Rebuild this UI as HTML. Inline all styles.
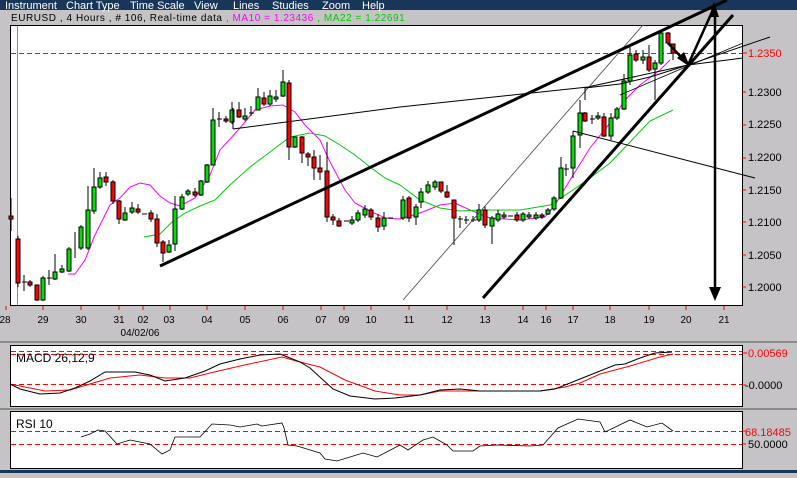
<!DOCTYPE html>
<html><head><meta charset="utf-8"><style>
body{margin:0;width:797px;height:473px;overflow:hidden;background:#c6c3c6;font-family:"Liberation Sans",sans-serif}
</style></head><body>
<svg width="797" height="473" xmlns="http://www.w3.org/2000/svg" font-family="Liberation Sans, sans-serif">
<rect width="797" height="473" fill="#c6c3c6"/>
<rect width="797" height="10" fill="#183659"/>
<g fill="#fff" font-size="11">
<text x="5" y="9">Instrument</text><text x="66" y="9">Chart Type</text><text x="130" y="9">Time Scale</text><text x="194" y="9">View</text><text x="233" y="9">Lines</text><text x="272" y="9">Studies</text><text x="322" y="9">Zoom</text><text x="362" y="9">Help</text>
</g>
<text x="11" y="21" font-size="10" fill="#000" letter-spacing="0.55">EURUSD , 4 Hours , # 106, Real-time data <tspan fill="#f0f">, MA10 = 1.23436</tspan><tspan fill="#0c0"> , MA22 = 1.22691</tspan></text>
<rect x="10.5" y="25.5" width="732" height="280" fill="#fff" stroke="#000"/>
<line x1="17.5" y1="26" x2="17.5" y2="305" stroke="#888"/>
<line x1="11" y1="53.5" x2="742" y2="53.5" stroke="#f00" stroke-dasharray="5,3"/>
<g font-size="11" fill="#000">
<text x="748" y="57" fill="#f00">1.2350</text><text x="748" y="96">1.2300</text><text x="748" y="128">1.2250</text><text x="748" y="161">1.2200</text><text x="748" y="194">1.2150</text><text x="748" y="226">1.2100</text><text x="748" y="259">1.2050</text><text x="748" y="291">1.2000</text>
</g>
<g stroke="#f00"><line x1="742" y1="53" x2="747" y2="53"/><line x1="742" y1="92" x2="746" y2="92"/><line x1="742" y1="125" x2="746" y2="125"/><line x1="742" y1="158" x2="746" y2="158"/><line x1="742" y1="190" x2="746" y2="190"/><line x1="742" y1="222" x2="746" y2="222"/><line x1="742" y1="255" x2="746" y2="255"/><line x1="742" y1="287" x2="746" y2="287"/></g>
<g stroke="#f00"><line x1="6" y1="306" x2="6" y2="310"/><line x1="43" y1="306" x2="43" y2="310"/><line x1="81" y1="306" x2="81" y2="310"/><line x1="119" y1="306" x2="119" y2="310"/><line x1="143" y1="306" x2="143" y2="310"/><line x1="170" y1="306" x2="170" y2="310"/><line x1="207" y1="306" x2="207" y2="310"/><line x1="245" y1="306" x2="245" y2="310"/><line x1="283" y1="306" x2="283" y2="310"/><line x1="321" y1="306" x2="321" y2="310"/><line x1="344" y1="306" x2="344" y2="310"/><line x1="371" y1="306" x2="371" y2="310"/><line x1="409" y1="306" x2="409" y2="310"/><line x1="447" y1="306" x2="447" y2="310"/><line x1="485" y1="306" x2="485" y2="310"/><line x1="523" y1="306" x2="523" y2="310"/><line x1="546" y1="306" x2="546" y2="310"/><line x1="573" y1="306" x2="573" y2="310"/><line x1="610" y1="306" x2="610" y2="310"/><line x1="649" y1="306" x2="649" y2="310"/><line x1="686" y1="306" x2="686" y2="310"/><line x1="724" y1="306" x2="724" y2="310"/></g>
<g font-size="10" fill="#000" text-anchor="middle">
<text x="5" y="323">28</text><text x="43" y="323">29</text><text x="81" y="323">30</text><text x="119" y="323">31</text><text x="143" y="323">02</text><text x="169" y="323">03</text><text x="207" y="323">04</text><text x="245" y="323">05</text><text x="283" y="323">06</text><text x="321" y="323">07</text><text x="344" y="323">09</text><text x="371" y="323">10</text><text x="409" y="323">11</text><text x="447" y="323">12</text><text x="485" y="323">13</text><text x="523" y="323">14</text><text x="546" y="323">16</text><text x="573" y="323">17</text><text x="610" y="323">18</text><text x="649" y="323">19</text><text x="686" y="323">20</text><text x="724" y="323">21</text>
<text x="140" y="336">04/02/06</text>
</g>
<polyline fill="none" stroke="#f0f" points="68,274 75,274 85,260 95,235 110,205 120,198 130,187 140,183 150,185 160,196 170,203 180,206 195,198 210,175 220,150 240,128 255,110 270,106 283,105 295,112 305,125 320,140 330,162 345,190 355,203 370,211 385,218 400,219 420,213 440,205 455,203 470,210 490,218 520,220 545,217 555,205 570,180 590,148 610,123 625,100 640,85 660,70 670,60"/>
<polyline fill="none" stroke="#0c0" points="144,237 160,234 172,222 185,213 200,206 215,200 230,185 250,167 270,152 290,137 310,133 325,136 340,145 355,155 370,167 385,178 400,185 420,200 440,208 460,211 480,210 520,210 550,205 570,192 590,178 610,163 630,142 650,121 673,110"/>
<g stroke="#000" stroke-width="1">
<path d="M11 198V231M18 236V287M24 275V291M30 280V287M37 285V301M43 276V301M49 270V285M55 254V280M62 265V273M69 247V272M75 232V258M81 225V250M88 186V250M94 168V214M100 172V189M106 172V186M113 180V204M119 200V224M125 207V221M132 202V214M138 204V214M151 210V222M157 214V247M163 240V262M169 240V253M175 196V251M182 194V210M188 189V196M195 188V197M201 180V196M207 164V183M213 108V165M219 112V127M226 116V123M232 102V124M239 102V118M245 108V121M251 106V116M258 88V110M264 92V106M270 90V106M276 90V102M283 70V97M289 80V160M295 137V148M302 136V163M308 152V166M314 150V180M320 155V180M327 142V222M333 214V225M339 218V227M352 216V225M358 210V222M365 205V218M371 208V220M378 214V232M384 212V230M403 196V220M409 196V222M416 204V225M421 188V208M428 181V194M435 180V190M441 182V193M447 185V198M454 200V245M460 216V228M466 216V224M473 216V222M479 204V222M485 206V228M492 216V244M498 210V222M504 212V219M517 212V222M523 212V222M529 212V219M536 212V220M542 213V219M548 208V215M554 196V211M561 157V199M566 164V176M573 131V178M580 100V148M585 112V122M592 115V124M598 112V120M604 113V137M611 113V140M617 107V120M624 74V110M630 45V85M636 50V62M643 50V64M649 45V72M655 60V100M661 30V65M668 32V45M673 44V60"/>
</g>
<g fill="#00e000" stroke="#000">
<rect x="41" y="278" width="4" height="22"/><rect x="53" y="272" width="4" height="7"/><rect x="60" y="269" width="4" height="3"/><rect x="67" y="249" width="4" height="22"/><rect x="79" y="227" width="4" height="21"/><rect x="86" y="210" width="4" height="38"/><rect x="92" y="187" width="4" height="24"/><rect x="98" y="178" width="4" height="9"/><rect x="123" y="213" width="4" height="7"/><rect x="130" y="208" width="4" height="4"/><rect x="167" y="245" width="4" height="7"/><rect x="173" y="209" width="4" height="35"/><rect x="180" y="197" width="4" height="12"/><rect x="186" y="191" width="4" height="3"/><rect x="199" y="181" width="4" height="14"/><rect x="205" y="165" width="4" height="17"/><rect x="211" y="120" width="4" height="45"/><rect x="230" y="110" width="4" height="12"/><rect x="243" y="116" width="4" height="3"/><rect x="256" y="97" width="4" height="13"/><rect x="268" y="96" width="4" height="8"/><rect x="274" y="97" width="4" height="2"/><rect x="281" y="82" width="4" height="14"/><rect x="293" y="137" width="4" height="10"/><rect x="350" y="220" width="4" height="3"/><rect x="356" y="213" width="4" height="7"/><rect x="363" y="209" width="4" height="6"/><rect x="382" y="218" width="4" height="8"/><rect x="401" y="200" width="4" height="18"/><rect x="414" y="207" width="4" height="10"/><rect x="419" y="192" width="4" height="10"/><rect x="426" y="185" width="4" height="7"/><rect x="433" y="182" width="4" height="5"/><rect x="477" y="210" width="4" height="10"/><rect x="490" y="218" width="4" height="8"/><rect x="496" y="214" width="4" height="6"/><rect x="502" y="215" width="4" height="2"/><rect x="521" y="214" width="4" height="6"/><rect x="527" y="215" width="4" height="2"/><rect x="534" y="215" width="4" height="3"/><rect x="546" y="210" width="4" height="4"/><rect x="552" y="198" width="4" height="11"/><rect x="559" y="168" width="4" height="30"/><rect x="571" y="136" width="4" height="32"/><rect x="578" y="113" width="4" height="22"/><rect x="596" y="116" width="4" height="2"/><rect x="609" y="118" width="4" height="18"/><rect x="615" y="109" width="4" height="9"/><rect x="622" y="81" width="4" height="28"/><rect x="628" y="55" width="4" height="26"/><rect x="641" y="57" width="4" height="3"/><rect x="653" y="63" width="4" height="6"/><rect x="659" y="33" width="4" height="30"/>
</g>
<g fill="#f00" stroke="#000">
<rect x="9" y="216" width="4" height="3"/><rect x="16" y="239" width="4" height="44"/><rect x="28" y="282" width="4" height="3"/><rect x="35" y="285" width="4" height="15"/><rect x="104" y="177" width="4" height="5"/><rect x="111" y="182" width="4" height="19"/><rect x="117" y="201" width="4" height="18"/><rect x="136" y="209" width="4" height="3"/><rect x="149" y="213" width="4" height="6"/><rect x="155" y="219" width="4" height="24"/><rect x="161" y="242" width="4" height="11"/><rect x="193" y="192" width="4" height="3"/><rect x="224" y="119" width="4" height="2"/><rect x="237" y="110" width="4" height="7"/><rect x="262" y="98" width="4" height="6"/><rect x="287" y="83" width="4" height="64"/><rect x="300" y="137" width="4" height="16"/><rect x="306" y="154" width="4" height="3"/><rect x="312" y="157" width="4" height="11"/><rect x="318" y="168" width="4" height="4"/><rect x="325" y="171" width="4" height="46"/><rect x="331" y="217" width="4" height="3"/><rect x="337" y="221" width="4" height="5"/><rect x="369" y="210" width="4" height="7"/><rect x="376" y="218" width="4" height="9"/><rect x="407" y="198" width="4" height="20"/><rect x="439" y="182" width="4" height="9"/><rect x="445" y="192" width="4" height="5"/><rect x="452" y="200" width="4" height="18"/><rect x="483" y="210" width="4" height="15"/><rect x="515" y="215" width="4" height="5"/><rect x="540" y="215" width="4" height="2"/><rect x="583" y="113" width="4" height="8"/><rect x="602" y="117" width="4" height="19"/><rect x="634" y="54" width="4" height="6"/><rect x="647" y="57" width="4" height="13"/><rect x="666" y="33" width="4" height="10"/><rect x="671" y="44" width="4" height="9"/>
</g>
<g stroke="#000"><path d="M22 282H27M47 278H52M142 214H147M217 119H222M249 113H254M344 221H349M388 218H393M458 219H463M464 220H469M471 220H476M508 216H513M564 169H569M590 119H595"/></g>
<g fill="none" stroke="#000">
<path d="M233 129L400 107L588 87L688 65L770 37" stroke-width="1"/>
<path d="M233 129V108" stroke-width="1"/>
<path d="M403 300L643 25" stroke="#444" stroke-width="0.8"/>
<path d="M573 131L755 178" stroke-width="1"/>
<path d="M585 100V88L620 84L650 77L688 65L743 58" stroke-width="1"/>
<path d="M620 95L688 66L743 43" stroke-width="0.8"/>
<path d="M160 266L727 0" stroke-width="3"/>
<path d="M483 298L733 15" stroke-width="3"/>
<path d="M688 65L712 12" stroke-width="2.5"/>
<path d="M715 8V292" stroke-width="2.5"/>
<path d="M668 43L683 59" stroke-width="2.5"/>
</g>
<g fill="#000">
<polygon points="709,3 719,3 714,18" transform="rotate(180 714 10)"/>
<polygon points="709,287 721,287 715,301"/>
<polygon points="677,58 690,67 684,52"/>
</g>
<rect x="0" y="341" width="797" height="2" fill="#8a8a8a"/>
<rect x="0" y="408" width="797" height="2" fill="#8a8a8a"/>
<rect x="10.5" y="345.5" width="732" height="61" fill="#fff" stroke="#000"/>
<g stroke="#f00" stroke-dasharray="5,3"><line x1="11" y1="351.5" x2="742" y2="351.5"/><line x1="11" y1="354.5" x2="742" y2="354.5"/><line x1="11" y1="384.5" x2="742" y2="384.5"/></g>
<text x="16" y="362" font-size="12" fill="#000">MACD 26,12,9</text>
<polyline fill="none" stroke="#f00" points="10,384 45,391 70,390 90,384 110,378 140,375 165,378 190,378 210,373 240,366 282,357 300,362 320,367 345,380 375,391 400,395 420,395 440,391 470,391 540,391 565,387 580,383 600,374 630,366 660,357 673,354"/>
<polyline fill="none" stroke="#000" points="10,384 20,389 40,394 60,393 75,388 90,381 105,372 135,372 150,375 165,381 185,378 205,371 220,364 240,359 260,355 280,354 300,362 310,368 333,389 350,396 375,399 395,398 420,395 440,390 460,389 480,391 540,391 555,389 575,381 590,375 600,371 615,365 625,364 640,358 655,353 672,352"/>
<text x="748" y="357" font-size="11" fill="#f00">0.00569</text>
<text x="745" y="389" font-size="11" fill="#000">-0.0000</text>
<g stroke="#f00"><line x1="742" y1="353" x2="747" y2="353"/><line x1="742" y1="385" x2="746" y2="385"/></g>
<rect x="10.5" y="411.5" width="732" height="57" fill="#fff" stroke="#000"/>
<g stroke="#f00" stroke-dasharray="5,3"><line x1="11" y1="431.5" x2="742" y2="431.5"/><line x1="11" y1="444.5" x2="742" y2="444.5"/></g>
<text x="16" y="428" font-size="12" fill="#000">RSI 10</text>
<polyline fill="none" stroke="#000" stroke-width="0.8" points="81,437 90,434 98,430 105,431 117,444 130,440 150,444 162,454 170,450 175,437 200,437 212,424 230,425 240,427 257,424 262,426 282,423 284,428 288,445 297,446 320,453 325,459 337,461 363,453 377,457 400,445 408,450 423,440 433,437 447,445 453,451 473,451 480,446 497,445 530,446 543,445 558,428 578,419 600,422 605,432 630,420 647,427 662,423 673,431"/>
<text x="745" y="436" font-size="11" fill="#f00">68.18485</text>
<text x="748" y="448" font-size="11" fill="#000">50.0000</text>
<g stroke="#f00"><line x1="742" y1="431" x2="746" y2="431"/><line x1="742" y1="444" x2="746" y2="444"/></g>
<rect x="0" y="470" width="797" height="3" fill="#183659"/>
</svg>
</body></html>
